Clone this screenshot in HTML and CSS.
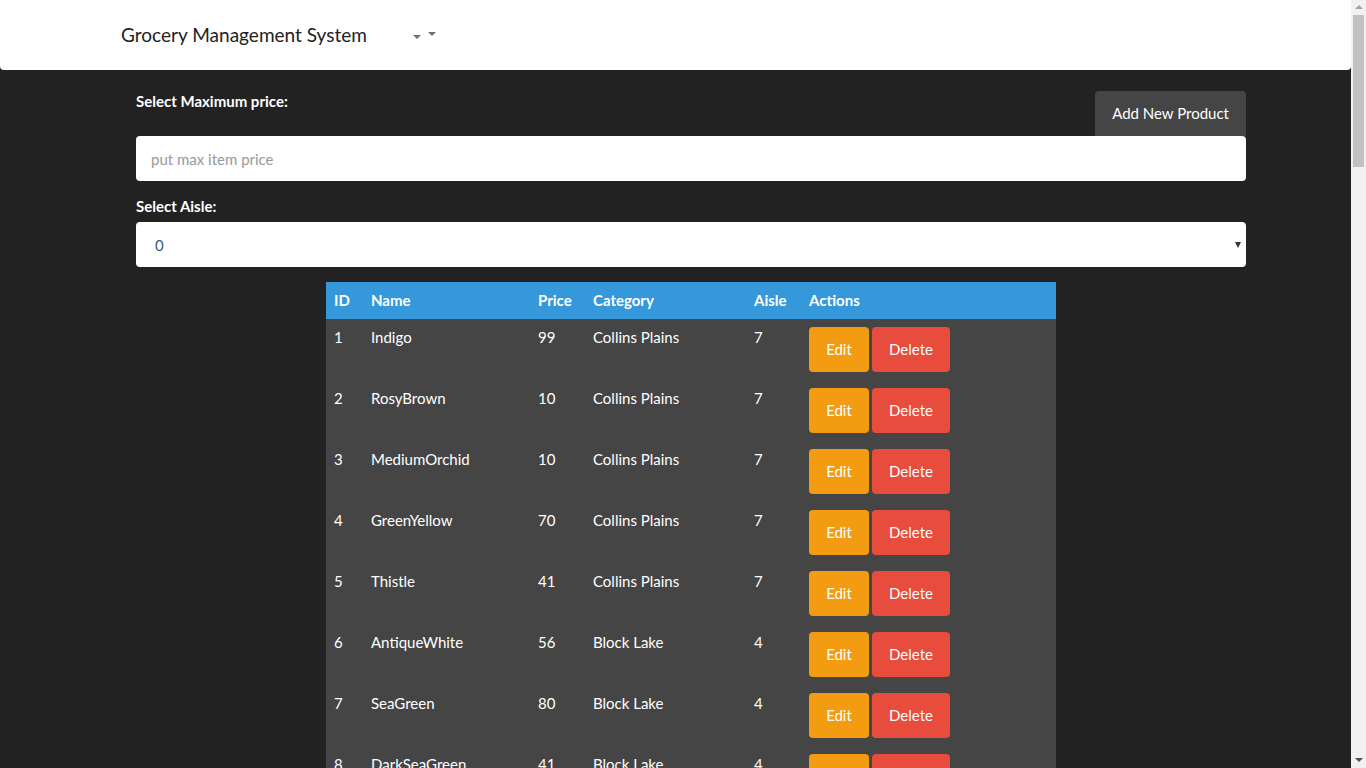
FILE: index.html
```html
<!DOCTYPE html>
<html lang="en">
<head>
<meta charset="utf-8">
<title>Grocery Management System</title>
<link rel="stylesheet" href="styles.css">
</head>
<body>
<div class="page">
  <nav class="navbar">
    <div class="brand">Grocery Management System</div>
    <span class="caret caret-a"></span>
    <span class="caret caret-b"></span>
  </nav>
  <main class="container">
    <div class="top-row">
      <label class="label label-first" for="maxprice">Select Maximum price:</label>
      <button class="btn btn-default">Add New Product</button>
    </div>
    <input id="maxprice" class="form-control" type="text" placeholder="put max item price">
    <label class="label label-aisle" for="aisle">Select Aisle:</label>
    <div class="select-wrap">
      <select id="aisle" class="form-select">
        <option>0</option>
        <option>4</option>
        <option>7</option>
      </select>
    </div>
    <table class="table">
      <thead>
        <tr><th class="c-id">ID</th><th class="c-name">Name</th><th class="c-price">Price</th><th class="c-cat">Category</th><th class="c-aisle">Aisle</th><th class="c-act">Actions</th></tr>
      </thead>
      <tbody>
        <tr><td>1</td><td>Indigo</td><td>99</td><td>Collins Plains</td><td>7</td><td class="actions"><button class="btn btn-warning">Edit</button><button class="btn btn-danger">Delete</button></td></tr>
        <tr><td>2</td><td>RosyBrown</td><td>10</td><td>Collins Plains</td><td>7</td><td class="actions"><button class="btn btn-warning">Edit</button><button class="btn btn-danger">Delete</button></td></tr>
        <tr><td>3</td><td>MediumOrchid</td><td>10</td><td>Collins Plains</td><td>7</td><td class="actions"><button class="btn btn-warning">Edit</button><button class="btn btn-danger">Delete</button></td></tr>
        <tr><td>4</td><td>GreenYellow</td><td>70</td><td>Collins Plains</td><td>7</td><td class="actions"><button class="btn btn-warning">Edit</button><button class="btn btn-danger">Delete</button></td></tr>
        <tr><td>5</td><td>Thistle</td><td>41</td><td>Collins Plains</td><td>7</td><td class="actions"><button class="btn btn-warning">Edit</button><button class="btn btn-danger">Delete</button></td></tr>
        <tr><td>6</td><td>AntiqueWhite</td><td>56</td><td>Block Lake</td><td>4</td><td class="actions"><button class="btn btn-warning">Edit</button><button class="btn btn-danger">Delete</button></td></tr>
        <tr><td>7</td><td>SeaGreen</td><td>80</td><td>Block Lake</td><td>4</td><td class="actions"><button class="btn btn-warning">Edit</button><button class="btn btn-danger">Delete</button></td></tr>
        <tr><td>8</td><td>DarkSeaGreen</td><td>41</td><td>Block Lake</td><td>4</td><td class="actions"><button class="btn btn-warning">Edit</button><button class="btn btn-danger">Delete</button></td></tr>
      </tbody>
    </table>
  </main>
</div>
<div class="scrollbar" aria-hidden="true">
  <span class="sb-arrow sb-up"></span>
  <span class="sb-thumb"></span>
  <span class="sb-arrow sb-down"></span>
</div>
</body>
</html>
```

FILE: styles.css
```css
html, body {
  margin: 0;
  padding: 0;
}
body {
  background: #222222;
  color: #ffffff;
  font-family: Lato, "Open Sans", "Liberation Sans", sans-serif;
  font-size: 15px;
  line-height: 1.42857;
  display: flex;
  height: 100vh;
  overflow: hidden;
}
.page {
  flex: 1;
  min-width: 0;
  height: 100vh;
  overflow: hidden;
}
.scrollbar {
  width: 15px;
  flex: none;
  height: 100vh;
  background: #f1f1f1;
  display: flex;
  flex-direction: column;
  align-items: center;
  box-sizing: border-box;
  padding: 5px 0 6px;
}
.sb-arrow {
  width: 0;
  height: 0;
  border-left: 4px solid transparent;
  border-right: 4px solid transparent;
}
.sb-up {
  border-bottom: 4px solid #a3a3a3;
}
.sb-down {
  border-top: 4px solid #505050;
  margin-top: auto;
}
.sb-thumb {
  display: block;
  width: 11px;
  height: 152px;
  margin-top: 6px;
  background: #c1c1c1;
}
.navbar {
  background: #ffffff;
  height: 70px;
  border-radius: 0 0 4px 4px;
  display: flex;
  align-items: center;
  padding-left: 121px;
  box-sizing: border-box;
}
.brand {
  color: #222222;
  font-size: 19.05px;
  line-height: 28px;
  margin-right: 46px;
}
.caret {
  display: inline-block;
  width: 0;
  height: 0;
  border-left: 4px solid transparent;
  border-right: 4px solid transparent;
  border-top: 4px solid #6f6f6f;
}
.caret-a {
  margin-top: 4px;
}
.caret-b {
  margin-left: 7px;
  margin-top: -2px;
  border-left-width: 4.5px;
  border-right-width: 4.5px;
}
.container {
  width: 1110px;
  margin-left: 136px;
  padding: 21px 0 40px;
}
.top-row {
  display: flex;
  justify-content: space-between;
  align-items: flex-start;
}
.label {
  display: block;
  font-weight: 700;
  font-size: 15px;
  line-height: 21px;
}
.btn {
  font-family: inherit;
  font-size: 15px;
  line-height: 21px;
  color: #ffffff;
  border: none;
  border-radius: 4px;
  padding: 12px 17px;
  cursor: pointer;
}
.btn-default {
  background: #464545;
  border-radius: 4px 4px 0 0;
}
.form-control {
  display: block;
  width: 100%;
  box-sizing: border-box;
  height: 45px;
  border: none;
  border-radius: 4px;
  background: #ffffff;
  padding: 0 15px;
  font-family: inherit;
  font-size: 15px;
  color: #464545;
  outline: none;
}
.form-control::placeholder {
  color: #9a9a9a;
}
.label-aisle {
  margin-top: 15px;
  margin-bottom: 5px;
}
.select-wrap {
  position: relative;
}
.select-wrap::after {
  content: "";
  position: absolute;
  right: 5px;
  top: 20px;
  width: 0;
  height: 0;
  border-left: 3.5px solid transparent;
  border-right: 3.5px solid transparent;
  border-top: 6px solid #333333;
  pointer-events: none;
}
.form-select {
  display: block;
  width: 100%;
  height: 45px;
  box-sizing: border-box;
  border: none;
  border-radius: 4px;
  background: #ffffff;
  padding: 0 15px 0 19px;
  font-family: inherit;
  font-size: 15px;
  color: #375a7f;
  -webkit-appearance: none;
  appearance: none;
  outline: none;
}
.table {
  width: 730px;
  margin: 15px auto 0;
  border-collapse: collapse;
  table-layout: fixed;
}
.table th, .table td {
  padding: 8px;
  text-align: left;
  vertical-align: top;
  line-height: 21px;
}
.table thead tr {
  background: #3498db;
}
.table th {
  font-weight: 700;
}
.table tbody tr {
  background: #464545;
}
.c-id { width: 21px; }
.c-name { width: 151px; }
.c-price { width: 39px; }
.c-cat { width: 145px; }
.c-aisle { width: 39px; }
.c-act { width: auto; }
.actions {
  display: flex;
  gap: 3px;
}
.btn-warning {
  background: #f39c12;
  width: 60px;
  height: 45px;
  padding: 0;
}
.btn-danger {
  background: #e74c3c;
  width: 78px;
  height: 45px;
  padding: 0;
}
```
